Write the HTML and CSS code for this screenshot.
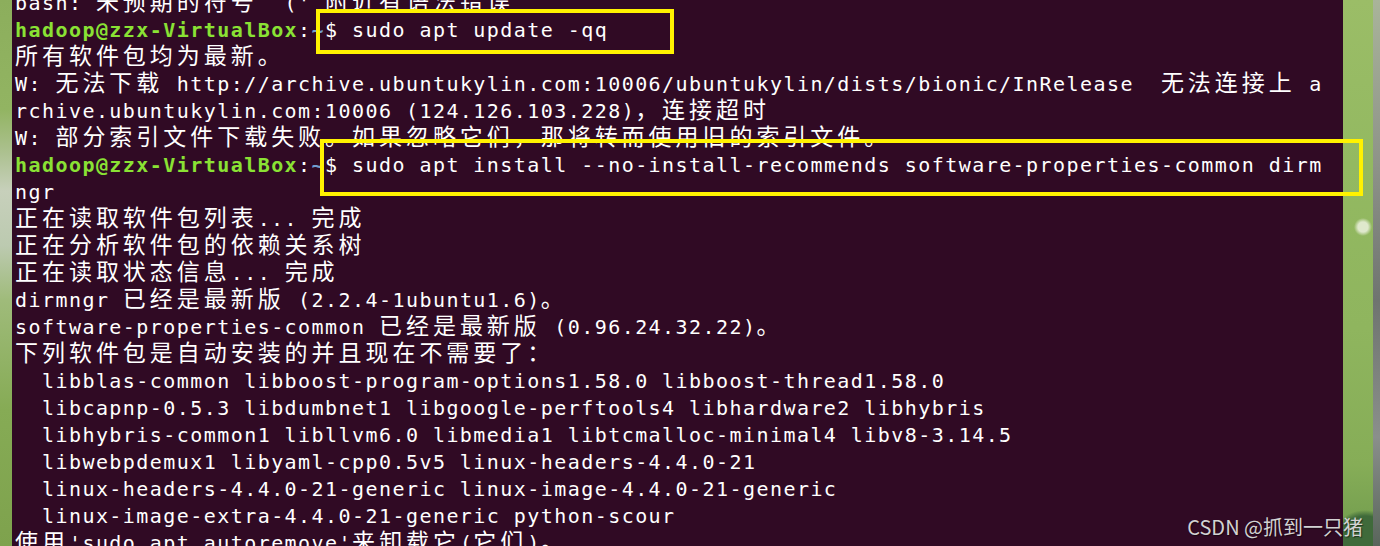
FILE: index.html
```html
<!DOCTYPE html>
<html lang="zh-CN">
<head>
<meta charset="utf-8">
<title>Terminal</title>
<link rel="stylesheet" href="styles.css">
</head>
<body>
<div class="screen">
  <div class="wall-l"></div>
  <div class="term">
    <div class="lines">
      <div class="ln">bash: <span class="c">未预期的符号</span> `(' <span class="c">附近有语法错误</span></div>
      <div class="ln"><span class="p">hadoop@zzx-VirtualBox</span>:<span class="t">~</span>$ sudo apt update -qq</div>
      <div class="ln"><span class="c">所有软件包均为最新。</span></div>
      <div class="ln">W: <span class="c">无法下载</span> http://archive.ubuntukylin.com:10006/ubuntukylin/dists/bionic/InRelease  <span class="c">无法连接上</span> a</div>
      <div class="ln">rchive.ubuntukylin.com:10006 (124.126.103.228)<span class="c">，连接超时</span></div>
      <div class="ln">W: <span class="c">部分索引文件下载失败。如果忽略它们，那将转而使用旧的索引文件。</span></div>
      <div class="ln"><span class="p">hadoop@zzx-VirtualBox</span>:<span class="t">~</span>$ sudo apt install --no-install-recommends software-properties-common dirm</div>
      <div class="ln">ngr</div>
      <div class="ln"><span class="c">正在读取软件包列表</span>... <span class="c">完成</span></div>
      <div class="ln"><span class="c">正在分析软件包的依赖关系树</span></div>
      <div class="ln"><span class="c">正在读取状态信息</span>... <span class="c">完成</span></div>
      <div class="ln">dirmngr <span class="c">已经是最新版</span> (2.2.4-1ubuntu1.6)<span class="c">。</span></div>
      <div class="ln">software-properties-common <span class="c">已经是最新版</span> (0.96.24.32.22)<span class="c">。</span></div>
      <div class="ln"><span class="c">下列软件包是自动安装的并且现在不需要了：</span></div>
      <div class="ln">  libblas-common libboost-program-options1.58.0 libboost-thread1.58.0</div>
      <div class="ln">  libcapnp-0.5.3 libdumbnet1 libgoogle-perftools4 libhardware2 libhybris</div>
      <div class="ln">  libhybris-common1 libllvm6.0 libmedia1 libtcmalloc-minimal4 libv8-3.14.5</div>
      <div class="ln">  libwebpdemux1 libyaml-cpp0.5v5 linux-headers-4.4.0-21</div>
      <div class="ln">  linux-headers-4.4.0-21-generic linux-image-4.4.0-21-generic</div>
      <div class="ln">  linux-image-extra-4.4.0-21-generic python-scour</div>
      <div class="ln"><span class="c">使用</span>'sudo apt autoremove'<span class="c">来卸载它</span>(<span class="c">它们</span>)<span class="c">。</span></div>
    </div>
  </div>
  <div class="wall-r"></div>
  <div class="wall-rr"></div>
  <div class="mark mark-1"></div>
  <div class="mark mark-2"></div>
  <div class="wm">CSDN @抓到一只猪</div>
</div>
</body>
</html>
```
FILE: styles.css
```css
html, body {
  margin: 0;
  padding: 0;
}
body {
  width: 1380px;
  height: 546px;
  overflow: hidden;
  background: #300a24;
}
.screen {
  position: relative;
  display: flex;
  width: 1380px;
  height: 546px;
  overflow: hidden;
}
.wall-l {
  width: 12px;
  flex: none;
  background: linear-gradient(180deg, #8cae5c 0%, #92b462 20%, #a9bf8a 27%, #c7d0bb 35%, #bccab0 45%, #9fbb7a 55%, #86ab55 75%, #7ea24d 100%);
}
.term {
  flex: 1;
  background: #300a24;
  padding-left: 3px;
  overflow: hidden;
}
.lines {
  margin-top: -10px;
}
.ln {
  height: 27px;
  line-height: 27px;
  white-space: pre;
  font-family: "DejaVu Sans Mono", "Liberation Mono", monospace;
  font-size: 20px;
  letter-spacing: 1.44px;
  color: #ffffff;
}
.c {
  font-family: "Noto Sans CJK SC", sans-serif;
  font-size: 23px;
  letter-spacing: 3.96px;
  line-height: 20px;
}
.p {
  color: #8ae234;
  font-weight: bold;
}
.t {
  color: #729fcf;
  font-weight: bold;
}
.wall-r {
  width: 30px;
  flex: none;
  background:
    radial-gradient(circle at 20px 227px, #dfe8cc 0 5px, rgba(223,232,204,0) 9px),
    radial-gradient(circle at 22px 546px, #3f6a3a 0 30px, rgba(63,106,58,0) 36px),
    linear-gradient(180deg, #9bbd67 0%, #93b961 30%, #8fb55e 60%, #86ad57 85%, #6f9a4d 100%);
}
.wall-rr {
  width: 7px;
  flex: none;
  background: linear-gradient(180deg, #a9b49a 0%, #8e9389 30%, #6f7470 55%, #8a8f8b 80%, #59655b 100%);
}
.mark {
  position: absolute;
  border: 4px solid #fff200;
  box-sizing: border-box;
}
.mark-1 {
  left: 316px;
  top: 9px;
  width: 358px;
  height: 45px;
}
.mark-2 {
  left: 320px;
  top: 139px;
  width: 1043px;
  height: 57px;
}
.wm {
  position: absolute;
  right: 17px;
  bottom: 6px;
  font-family: "Noto Sans CJK SC", sans-serif;
  font-size: 20px;
  line-height: 26px;
  color: #d2d2d2;
  text-shadow: 1px 1px 1px rgba(0,0,0,0.5);
  white-space: nowrap;
}
```
